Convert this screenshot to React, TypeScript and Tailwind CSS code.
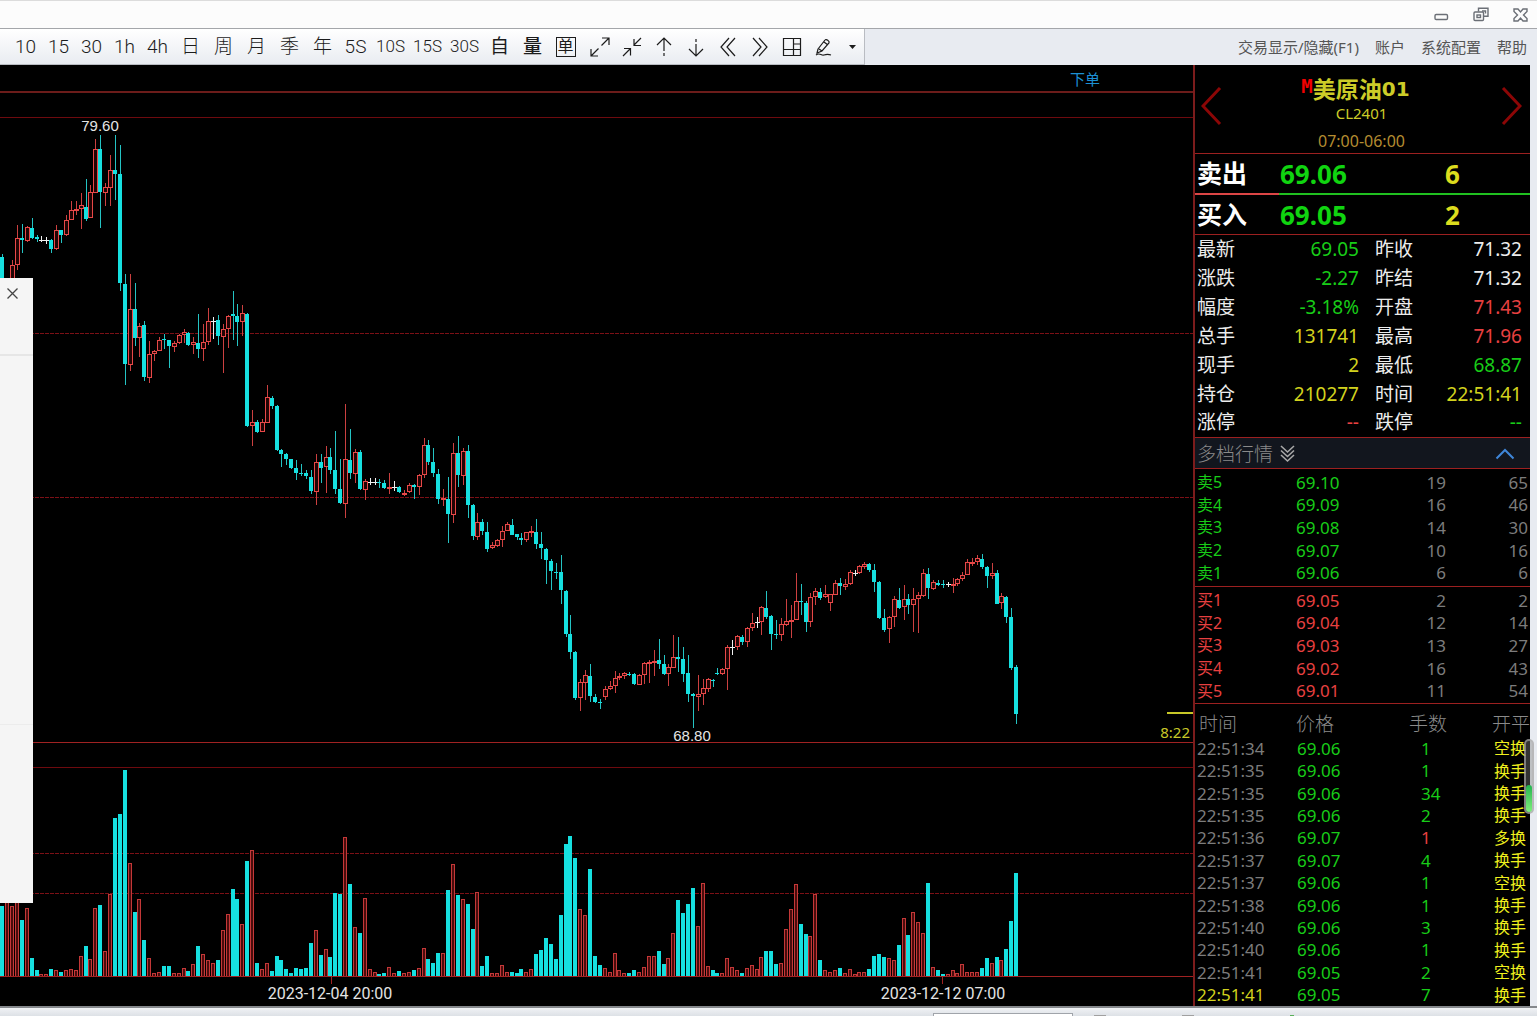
import type { ReactNode } from "react";

// up = hollow red, down = solid cyan, flat = white cross
type Kind = "u" | "d" | "f";
// kind, high, body top, body bottom, low, volume
type Bar = [Kind, number, number, number, number, number];

const BARS: Bar[] = [
  ["d", 254, 257, 284, 284, 70], ["u", 285, 286, 290, 292, 76], ["u", 260, 265, 284, 284, 70], ["u", 225, 238, 265, 270, 76],
  ["d", 224, 238, 240, 253, 56], ["u", 226, 227, 241, 242, 68], ["d", 218, 228, 238, 239, 18], ["d", 235, 237, 239, 242, 6],
  ["f", 236, 240, 240, 242, 2], ["f", 237, 240, 240, 244, 2], ["d", 239, 240, 249, 253, 7], ["u", 225, 230, 249, 250, 6],
  ["d", 230, 230, 235, 243, 4], ["u", 215, 220, 235, 236, 6], ["u", 201, 210, 220, 220, 7], ["u", 201, 209, 211, 215, 6],
  ["u", 193, 205, 209, 229, 20], ["d", 179, 207, 219, 221, 30], ["u", 185, 192, 218, 218, 17], ["u", 139, 149, 193, 193, 68],
  ["d", 135, 149, 192, 228, 71], ["u", 183, 187, 193, 206, 25], ["u", 155, 170, 188, 206, 82], ["d", 135, 170, 174, 200, 158],
  ["d", 145, 174, 283, 291, 162], ["d", 274, 284, 364, 385, 206], ["u", 274, 309, 365, 371, 113], ["d", 283, 309, 338, 346, 64],
  ["u", 323, 326, 338, 357, 77], ["d", 321, 325, 377, 381, 36], ["u", 341, 354, 378, 383, 18], ["u", 350, 351, 354, 361, 3],
  ["u", 337, 340, 351, 351, 4], ["d", 334, 339, 340, 349, 10], ["d", 340, 340, 346, 368, 10], ["u", 341, 343, 347, 352, 3],
  ["u", 334, 335, 343, 344, 3], ["u", 329, 332, 335, 343, 8], ["d", 332, 333, 345, 346, 5], ["u", 337, 342, 345, 354, 12],
  ["d", 314, 343, 349, 358, 30], ["u", 324, 342, 349, 361, 22], ["u", 308, 321, 342, 345, 16], ["f", 317, 321, 321, 339, 13],
  ["d", 315, 320, 336, 345, 16], ["u", 324, 329, 337, 373, 46], ["u", 315, 316, 329, 348, 62], ["d", 291, 314, 316, 340, 87],
  ["d", 304, 316, 322, 346, 77], ["u", 305, 313, 322, 336, 52], ["d", 313, 314, 426, 427, 115], ["u", 410, 422, 426, 446, 126],
  ["d", 420, 422, 432, 433, 13], ["u", 419, 422, 432, 432, 7], ["u", 385, 397, 423, 423, 13], ["d", 396, 398, 406, 409, 5],
  ["d", 405, 406, 450, 451, 20], ["d", 449, 450, 454, 467, 16], ["d", 453, 454, 459, 465, 7], ["d", 459, 459, 468, 469, 3],
  ["d", 460, 468, 473, 480, 8], ["d", 464, 473, 474, 476, 7], ["d", 470, 473, 476, 479, 8], ["d", 470, 477, 491, 494, 33],
  ["u", 454, 462, 492, 505, 46], ["d", 454, 462, 468, 483, 21], ["u", 446, 457, 467, 493, 27], ["d", 448, 457, 470, 474, 19],
  ["d", 431, 470, 489, 494, 83], ["d", 459, 489, 503, 504, 82], ["u", 404, 459, 504, 518, 139], ["d", 429, 460, 473, 479, 92],
  ["u", 449, 452, 474, 483, 49], ["d", 450, 452, 489, 490, 43], ["u", 479, 481, 490, 500, 78], ["f", 478, 482, 482, 485, 7],
  ["f", 478, 482, 482, 485, 4], ["d", 479, 482, 483, 488, 2], ["d", 480, 483, 488, 489, 3], ["u", 473, 487, 488, 494, 9],
  ["f", 481, 487, 487, 491, 3], ["d", 486, 487, 492, 493, 5], ["u", 490, 493, 494, 496, 3], ["u", 483, 485, 492, 493, 4],
  ["d", 484, 485, 487, 499, 6], ["u", 474, 475, 487, 495, 8], ["u", 438, 445, 475, 478, 28], ["d", 440, 445, 462, 465, 17],
  ["d", 448, 462, 473, 477, 13], ["d", 469, 474, 499, 504, 23], ["u", 489, 498, 500, 506, 23], ["d", 477, 499, 514, 543, 86],
  ["u", 443, 453, 515, 523, 112], ["d", 436, 453, 475, 487, 81], ["u", 448, 451, 476, 485, 77], ["d", 445, 451, 505, 518, 72],
  ["d", 504, 505, 536, 540, 47], ["u", 513, 522, 537, 540, 84], ["d", 519, 522, 531, 535, 10], ["d", 522, 532, 549, 552, 20],
  ["u", 542, 545, 548, 549, 3], ["u", 539, 540, 546, 547, 3], ["u", 526, 531, 540, 547, 11], ["u", 522, 524, 531, 531, 4],
  ["d", 519, 525, 535, 535, 4], ["d", 534, 534, 537, 540, 3], ["d", 533, 538, 540, 545, 7], ["u", 532, 532, 540, 542, 4],
  ["u", 526, 531, 532, 537, 7], ["d", 519, 532, 544, 549, 22], ["d", 532, 544, 548, 559, 26], ["d", 548, 549, 560, 584, 38],
  ["d", 559, 561, 571, 590, 32], ["d", 563, 572, 573, 579, 17], ["d", 555, 572, 590, 604, 61], ["d", 590, 591, 634, 637, 132],
  ["d", 615, 634, 652, 659, 140], ["d", 651, 652, 698, 700, 118], ["u", 679, 682, 698, 711, 67], ["u", 670, 675, 683, 700, 61],
  ["d", 664, 676, 696, 702, 107], ["d", 694, 697, 702, 703, 20], ["d", 699, 702, 703, 709, 11], ["u", 686, 689, 697, 700, 8],
  ["u", 681, 686, 689, 690, 4], ["u", 671, 678, 686, 693, 23], ["u", 673, 676, 678, 680, 6], ["u", 672, 673, 676, 679, 3],
  ["d", 672, 674, 675, 676, 3], ["d", 673, 674, 684, 685, 6], ["u", 674, 675, 685, 685, 4], ["u", 662, 663, 675, 684, 9],
  ["u", 660, 662, 664, 683, 20], ["u", 650, 661, 663, 676, 20], ["d", 639, 660, 664, 669, 25], ["d", 655, 664, 674, 675, 12],
  ["u", 664, 667, 674, 686, 18], ["u", 635, 657, 668, 668, 43], ["d", 637, 657, 659, 672, 76], ["d", 647, 659, 674, 682, 63],
  ["d", 655, 673, 694, 702, 72], ["d", 693, 694, 696, 728, 88], ["u", 675, 694, 697, 711, 50], ["u", 679, 688, 694, 705, 93],
  ["u", 678, 679, 689, 692, 10], ["d", 679, 680, 681, 687, 6], ["d", 668, 673, 674, 675, 3], ["u", 668, 669, 674, 675, 3],
  ["u", 645, 647, 669, 690, 18], ["f", 640, 647, 647, 655, 9], ["u", 635, 636, 647, 650, 6], ["d", 635, 637, 642, 645, 3],
  ["u", 627, 628, 642, 647, 8], ["u", 613, 623, 628, 631, 11], ["f", 617, 622, 622, 628, 7], ["u", 606, 607, 622, 635, 19],
  ["d", 591, 608, 617, 619, 25], ["d", 615, 616, 634, 650, 25], ["d", 620, 634, 635, 639, 12], ["u", 618, 624, 635, 641, 13],
  ["u", 599, 621, 625, 626, 47], ["u", 605, 620, 622, 638, 67], ["u", 573, 601, 620, 620, 92], ["d", 584, 601, 602, 615, 52],
  ["d", 601, 603, 622, 632, 42], ["u", 593, 597, 622, 627, 40], ["u", 588, 591, 597, 605, 82], ["d", 588, 592, 598, 600, 16],
  ["u", 585, 594, 597, 598, 6], ["u", 594, 594, 603, 611, 4], ["u", 580, 583, 595, 595, 6], ["d", 578, 583, 586, 595, 8],
  ["u", 579, 584, 587, 590, 3], ["u", 570, 572, 584, 585, 7], ["f", 570, 573, 573, 576, 2], ["u", 565, 566, 573, 574, 4],
  ["u", 562, 564, 567, 569, 4], ["d", 563, 564, 570, 572, 7], ["d", 564, 570, 582, 592, 20], ["d", 581, 582, 618, 619, 22],
  ["d", 609, 618, 630, 632, 19], ["u", 616, 617, 629, 643, 18], ["u", 596, 599, 617, 627, 16], ["d", 588, 600, 608, 609, 31],
  ["u", 585, 599, 607, 620, 58], ["d", 594, 599, 605, 614, 41], ["u", 588, 599, 605, 632, 64], ["u", 592, 595, 599, 633, 54],
  ["u", 569, 573, 596, 597, 43], ["d", 568, 574, 588, 599, 93], ["u", 580, 582, 589, 590, 9], ["d", 580, 583, 585, 586, 6],
  ["d", 580, 584, 585, 588, 2], ["f", 582, 584, 584, 587, 2], ["u", 578, 584, 585, 593, 6], ["u", 578, 579, 584, 586, 3],
  ["u", 572, 575, 579, 581, 12], ["u", 559, 562, 575, 575, 4], ["u", 558, 562, 563, 566, 4], ["u", 555, 558, 562, 565, 4],
  ["d", 554, 559, 567, 569, 8], ["d", 566, 567, 576, 588, 18], ["u", 563, 573, 576, 579, 13], ["d", 570, 573, 604, 604, 19],
  ["u", 593, 596, 603, 609, 16], ["d", 596, 597, 617, 623, 27], ["d", 608, 617, 668, 670, 55], ["d", 665, 667, 714, 724, 103],
];

const GREEN = "text-[#18cc18]";
const RED = "text-[#e84040]";
const YELLOW = "text-[#d2d21e]";
const WHITE = "text-[#ececec]";

const QUOTES = [
  ["最新", "69.05", GREEN, "昨收", "71.32", WHITE],
  ["涨跌", "-2.27", GREEN, "昨结", "71.32", WHITE],
  ["幅度", "-3.18%", GREEN, "开盘", "71.43", RED],
  ["总手", "131741", YELLOW, "最高", "71.96", RED],
  ["现手", "2", YELLOW, "最低", "68.87", GREEN],
  ["持仓", "210277", YELLOW, "时间", "22:51:41", YELLOW],
  ["涨停", "--", RED, "跌停", "--", GREEN],
];

const ASKS = [
  ["卖5", "69.10", "19", "65"],
  ["卖4", "69.09", "16", "46"],
  ["卖3", "69.08", "14", "30"],
  ["卖2", "69.07", "10", "16"],
  ["卖1", "69.06", "6", "6"],
];

const BIDS = [
  ["买1", "69.05", "2", "2"],
  ["买2", "69.04", "12", "14"],
  ["买3", "69.03", "13", "27"],
  ["买4", "69.02", "16", "43"],
  ["买5", "69.01", "11", "54"],
];

const TRADES = [
  ["22:51:34", "69.06", "1", "空换"],
  ["22:51:35", "69.06", "1", "换手"],
  ["22:51:35", "69.06", "34", "换手"],
  ["22:51:35", "69.06", "2", "换手"],
  ["22:51:36", "69.07", "1", "多换"],
  ["22:51:37", "69.07", "4", "换手"],
  ["22:51:37", "69.06", "1", "空换"],
  ["22:51:38", "69.06", "1", "换手"],
  ["22:51:40", "69.06", "3", "换手"],
  ["22:51:40", "69.06", "1", "换手"],
  ["22:51:41", "69.05", "2", "空换"],
  ["22:51:41", "69.05", "7", "换手"],
];

const PERIODS = ["10", "15", "30", "1h", "4h", "日", "周", "月", "季", "年", "5S"];
const SECONDS = ["10S", "15S", "30S"];

function TitleBar() {
  return (
    <header className="flex h-[29px] shrink-0 items-center justify-end gap-6 border-t border-b border-t-[#dcdcdc] border-b-[#a4a6aa] bg-[#fcfcfc] pr-[9px]">
      <button aria-label="最小化" className="text-[#6b6f76]">
        <svg width="15" height="14" fill="none" stroke="currentColor" strokeWidth="1.4">
          <rect x="1" y="6.500" width="12.500" height="5" rx="1.200" />
        </svg>
      </button>
      <button aria-label="还原" className="text-[#6b6f76]">
        <svg width="16" height="15" fill="none" stroke="currentColor" strokeWidth="1.4">
          <path d="M5.500 4.500V1.200h9.500v8h-4" />
          <rect x="1" y="5" width="9.500" height="8.500" rx="1" />
          <rect x="4" y="8" width="3.500" height="2.500" />
          <path d="M9 4h3.500v2.500" />
        </svg>
      </button>
      <button aria-label="关闭" className="text-[#6b6f76]">
        <svg width="15" height="14" fill="none" stroke="currentColor" strokeWidth="1.4">
          <path d="M1 1h4l2.500 3L10 1h4v2.500L10.500 7l3.500 3.500V13h-4l-2.500-3L5 13H1v-2.500L4.500 7 1 3.500z" />
        </svg>
      </button>
    </header>
  );
}

function Tool({ label, children }: { label: string; children: ReactNode }) {
  return (
    <button aria-label={label} className="flex h-8 w-8 items-center justify-center">
      <svg width="22" height="22" fill="none" stroke="currentColor" strokeWidth="1.200">
        {children}
      </svg>
    </button>
  );
}

function Toolbar() {
  return (
    <div className="flex h-9 shrink-0 items-stretch justify-between bg-[#e8ebf1]">
      <div className="flex items-center border-r border-b border-r-[#b9bcc2] border-b-[#b9bcc2] bg-linear-to-b from-white to-[#e9ecf1] pl-[9px] font-['Roboto','Noto_Sans_CJK_SC',sans-serif] text-[19px] leading-none text-[#1c1c1c]">
        {PERIODS.map((p) => (
          <button key={p} className="w-[33px] font-light">
            {p}
          </button>
        ))}
        {SECONDS.map((p) => (
          <button key={p} className="w-[37px] text-[17px] leading-none font-light">
            {p}
          </button>
        ))}
        <button className="w-[33px]">自</button>
        <button className="w-[33px] font-medium">量</button>
        <button className="mr-0.5 flex w-[33px] justify-center">
          <span className="flex h-5 w-5 items-center justify-center border border-current text-base leading-none">单</span>
        </button>
        <Tool label="放大">
          <path d="M13 2h7v7M20 2l-7.500 7.500M9.500 12.500L2 20M2 13v7h7" />
        </Tool>
        <Tool label="缩小">
          <path d="M20 2l-7 7M13 3v6.500h7M2 20l7-7M3 12.500h6.500v7" />
        </Tool>
        <Tool label="上移">
          <path d="M11 2v13M4 9l7-7 7 7M11 17v3" />
        </Tool>
        <Tool label="下移">
          <path d="M11 20V8M4 13l7 7 7-7M11 3v3" />
        </Tool>
        <Tool label="向前">
          <path d="M12 2l-8 9 8 9M18 2l-8 9 8 9" />
        </Tool>
        <Tool label="向后">
          <path d="M4 2l8 9-8 9M10 2l8 9-8 9" />
        </Tool>
        <Tool label="布局">
          <path d="M2.500 2.500h17v17h-17zM12.500 2.500v17M2.500 13.500h17M12.500 8h7" />
        </Tool>
        <Tool label="画线">
          <path d="M5 13l7-9c1-1.500 5 1 4 3l-7 8-5 2zM6 13l3 2M11 6l4 3M3 19c4-3 5 1 8 0s4-1 7 0" />
        </Tool>
        <button aria-label="更多" className="flex w-6 justify-center">
          <svg width="7" height="4" fill="currentColor">
            <path d="M0 0h7L3.500 4z" />
          </svg>
        </button>
      </div>
      <nav className="flex items-center gap-4 pr-[10px] text-[15px] text-[#555]">
        <a href="#trade">交易显示/隐藏(F1)</a>
        <a href="#account">账户</a>
        <a href="#settings">系统配置</a>
        <a href="#help">帮助</a>
      </nav>
    </div>
  );
}

function Candle({ bar, x }: { bar: Bar; x: number }) {
  const [kind, high, top, bottom, low, volume] = bar;
  const base = 976;
  if (kind === "d") {
    return (
      <g fill="#16e0e0">
        <rect x={x} y={high} width="1" height={low - high} fill="#24c4c4" />
        <rect x={x - 2} y={top} width="4" height={Math.max(bottom - top, 1)} />
        <rect x={x - 2} y={base - volume} width="4" height={volume} />
      </g>
    );
  }
  const color = kind === "f" ? "#f0f0f0" : "#e84848";
  return (
    <g fill="none">
      <path d={`M${x + 0.5} ${high}V${top}M${x + 0.5} ${bottom}V${low}`} stroke={kind === "f" ? color : "#cc4040"} />
      {kind === "f" ? (
        <path d={`M${x - 2} ${top + 0.5}h5M${x + 0.5} ${high}V${low}`} stroke={color} />
      ) : (
        <rect x={x - 1.5} y={top + 0.5} width="4" height={Math.max(bottom - top - 1, 1)} stroke={color} fill="#200404" />
      )}
      <rect x={x - 1.5} y={base - volume + 0.5} width="3" height={volume} stroke="#c43838" fill="#4a0c0c" />
    </g>
  );
}

function Chart() {
  return (
    <section className="relative flex min-w-0 flex-1 flex-col bg-black">
      <div className="flex h-7 shrink-0 items-center justify-end border-b-2 border-[#6c1c1a] pt-0.5 pr-[93px]">
        <button className="text-[15px] leading-none text-[#1c90d4]">下单</button>
      </div>
      <svg className="w-full flex-1" shapeRendering="crispEdges">
        <g transform="translate(0 -93)">
          <g stroke="#6e0a0e">
            <line x1="0" x2="100%" y1="117.500" y2="117.500" />
            <line x1="0" x2="100%" y1="767.500" y2="767.500" />
          </g>
          <g stroke="#7c1016" strokeDasharray="4 1">
            <line x1="0" x2="100%" y1="333.500" y2="333.500" />
            <line x1="0" x2="100%" y1="497.500" y2="497.500" />
            <line x1="0" x2="100%" y1="853.500" y2="853.500" />
            <line x1="0" x2="100%" y1="893.500" y2="893.500" />
          </g>
          <g stroke="#a02222">
            <line x1="0" x2="100%" y1="742.500" y2="742.500" />
            <path d="M331.500 977v7M942.500 977v7" />
          </g>
          {BARS.map((bar, i) => (
            <Candle key={i} bar={bar} x={Math.round(2.3 + i * 4.898)} />
          ))}
          <line x1="0" x2="100%" y1="976.500" y2="976.500" stroke="#a02222" />
          <g className="font-['Liberation_Sans',sans-serif] text-[15px]" fill="#e4e4e4" textAnchor="middle">
            <text x="100" y="131">79.60</text>
            <text x="692" y="741">68.80</text>
          </g>
          <g className="font-['Roboto',sans-serif] text-base" fill="#e4e4e4" textAnchor="middle">
            <text x="330" y="999">2023-12-04 20:00</text>
            <text x="943" y="999">2023-12-12 07:00</text>
          </g>
        </g>
      </svg>

      {/* countdown to bar close */}
      <div className="absolute top-[647px] right-0 w-[26px] border-t-2 border-[#c8c828]" />
      <span className="absolute top-[659px] right-[3px] text-[15px] leading-4 text-[#c8c828]">8:22</span>

      {/* docked window, mostly off screen */}
      <aside className="absolute top-[213px] left-0 h-[625px] w-[33px] bg-[#f5f5f5]">
        <button aria-label="关闭窗口" className="flex h-[78px] w-full items-start border-b-2 border-[#e6e6e6] pt-[10px] pl-[7px] text-[#444]">
          <svg width="11" height="11" fill="none" stroke="currentColor" strokeWidth="1.300">
            <path d="M.5.5l10 10M10.500.5l-10 10" />
          </svg>
        </button>
        <div className="h-[369px] border-b border-[#ececec]" />
      </aside>
    </section>
  );
}

function Side({ name, price, size }: { name: string; price: string; size: string }) {
  return (
    <div className="flex h-[39px] items-center pl-0.5 text-[26px] leading-none font-bold">
      <span className="w-[83px] text-[25px] text-white">{name}</span>
      <span className="w-[165px] text-[#10d410]">{price}</span>
      <span className="text-[#dcdc1e]">{size}</span>
    </div>
  );
}

function Depth({ rows, color }: { rows: string[][]; color: string }) {
  return (
    <table className="h-[113px] w-full table-fixed text-[17px] leading-none">
      <tbody>
        {rows.map(([name, price, size, total]) => (
          <tr key={name} className={color}>
            <th className="w-[101px] p-0 pl-0.5 text-left text-base leading-none font-normal">{name}</th>
            <td className="p-0">{price}</td>
            <td className="w-[70px] p-0 text-right text-[#7c7c7c]">{size}</td>
            <td className="w-[84px] p-0 pr-0.5 text-right text-[#7c7c7c]">{total}</td>
          </tr>
        ))}
      </tbody>
    </table>
  );
}

function Panel() {
  return (
    <aside className="relative w-[337px] shrink-0 border-l-2 border-[#7c1c1c] bg-black">
      <div className="flex h-[89px] items-center justify-between border-b border-[#9c2020] pr-2 pb-1 pl-1.5 text-[#8c0606]">
        <button aria-label="上一个合约">
          <svg width="21" height="40" fill="none" stroke="currentColor" strokeWidth="3">
            <path d="M19 1L2 19l17 18" />
          </svg>
        </button>
        <div className="flex h-full flex-col items-center pt-3 text-[#cccc28]">
          <h1 className="flex pr-3 text-[23px] leading-6 font-bold">
            <sup className="top-0 font-['DejaVu_Sans_Mono',monospace] text-[19px] leading-none text-[#f00000]">M</sup>
            美原油
            <span className="font-['DejaVu_Sans',sans-serif] text-[20px]">01</span>
          </h1>
          <span className="text-[15px] leading-6">CL2401</span>
          <span className="pt-1 text-base leading-6 text-[#b48c30]">07:00-06:00</span>
        </div>
        <button aria-label="下一个合约">
          <svg width="21" height="40" fill="none" stroke="currentColor" strokeWidth="3">
            <path d="M2 1l17 18L2 37" />
          </svg>
        </button>
      </div>

      <Side name="卖出" price="69.06" size="6" />
      <div className="flex h-0.5">
        <div className="w-1/4 bg-[#dc4646]" />
        <div className="flex-1 bg-[#20c020]" />
      </div>
      <Side name="买入" price="69.05" size="2" />

      <table className="w-full table-fixed border-t border-b border-[#9c2020] text-[19px] leading-none">
        <tbody>
          {QUOTES.map(([a, av, ac, b, bv, bc]) => (
            <tr key={a} className="h-[29px]">
              <th className="w-[50px] p-0 pl-0.5 text-left font-normal text-[#ececec]">{a}</th>
              <td className={`w-[114px] p-0 text-right ${ac}`}>{av}</td>
              <th className="w-[66px] p-0 pl-4 text-left font-normal text-[#ececec]">{b}</th>
              <td className={`p-0 pr-2 text-right ${bc}`}>{bv}</td>
            </tr>
          ))}
        </tbody>
      </table>

      <div className="flex h-[31px] items-center justify-between border-b border-[#9c2020] bg-[#12161e] pt-0.5 pr-[15px] pl-0.5">
        <button className="flex items-center gap-[7px] text-[19px] leading-none font-light text-[#8a8a8a]">
          多档行情
          <svg width="15" height="18" fill="none" stroke="#a8a8a8" strokeWidth="1.600">
            <path d="M1 1l6.500 6L14 1M1 5.500l6.500 6L14 5.500M1 10l6.500 6L14 10" />
          </svg>
        </button>
        <button aria-label="收起">
          <svg width="20" height="12" fill="none" stroke="#3f86d8" strokeWidth="2">
            <path d="M1.500 10.500L10 2l8.500 8.500" />
          </svg>
        </button>
      </div>

      <div className="border-b border-[#9c2020] pt-0.5 pb-0.5">
        <Depth rows={ASKS} color={GREEN} />
      </div>
      <div className="border-b border-[#9c2020] pt-0.5 pb-px">
        <Depth rows={BIDS} color={RED} />
      </div>

      <table className="h-[302px] w-full table-fixed text-[17px] leading-none whitespace-nowrap">
        <thead>
          <tr className="h-[33px] text-left text-[19px] leading-none text-[#8a8a8a]">
            <th className="w-[101px] p-0 pt-2 pl-1 font-light">时间</th>
            <th className="w-[113px] p-0 pt-2 font-light">价格</th>
            <th className="p-0 pt-2 font-light">手数</th>
            <th className="w-[38px] p-0 pt-2 font-light">开平</th>
          </tr>
        </thead>
        <tbody>
          {TRADES.map(([time, price, size, type], i) => (
            <tr key={i} className={GREEN}>
              <td className={i === TRADES.length - 1 ? "p-0 pl-0.5 text-[#d2d21e]" : "p-0 pl-0.5 text-[#7c7c7c]"}>{time}</td>
              <td className="p-0 pl-px">{price}</td>
              <td className={i === 4 ? "p-0 pl-3 text-[#e84040]" : "p-0 pl-3"}>{size}</td>
              <td className="p-0 pl-0.5 text-base leading-none text-[#f0f01e]">{type}</td>
            </tr>
          ))}
        </tbody>
      </table>

      {/* volume slider floating over the panel edge */}
      <div className="absolute top-[674px] -right-1 flex h-[75px] w-[10px] flex-col justify-end rounded-full border-2 border-[#b4b4b4]/60 bg-[#808080]/40">
        <div className="h-[27px] rounded-full bg-linear-to-b from-[#1eb450] to-[#7cf07c]" />
      </div>
    </aside>
  );
}

function StatusBar() {
  return (
    <footer className="flex h-[10px] shrink-0 items-end justify-end border-t-2 border-[#85888c] bg-linear-to-b from-[#f0f2f5] to-[#dde1e6] pr-[243px]">
      <div className="mr-[21px] h-[3px] w-[140px] border-x border-t border-[#a0a4aa] bg-white" />
      <div className="mr-[76px] h-px w-3 bg-[#a0a0a0]" />
      <div className="mr-[96px] h-px w-3 bg-[#a0a0a0]" />
      <div className="h-px w-1 bg-[#58b058]" />
    </footer>
  );
}

export default function App() {
  return (
    <div className="flex h-screen min-h-[600px] flex-col overflow-hidden bg-[#e8ebf1] font-['Noto_Sans','Noto_Sans_CJK_SC',sans-serif]">
      <TitleBar />
      <Toolbar />
      <main className="flex min-h-0 flex-1 overflow-hidden pr-[7px]">
        <Chart />
        <Panel />
      </main>
      <StatusBar />
    </div>
  );
}
